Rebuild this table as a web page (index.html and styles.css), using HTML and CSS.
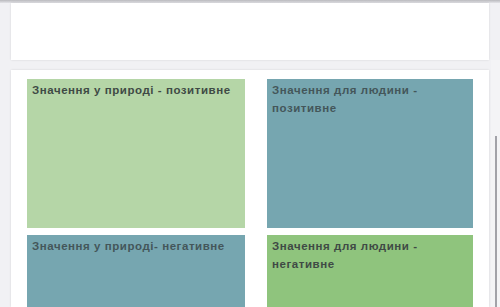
FILE: index.html
```html
<!DOCTYPE html>
<html lang="uk">
<head>
<meta charset="utf-8">
<link rel="stylesheet" href="styles.css">
</head>
<body>
<div class="topshade"></div>
<div class="page">
  <div class="card card-top"></div>
  <div class="card card-main">
    <div class="grid">
      <div class="tile t-green">Значення у природі - позитивне</div>
      <div class="tile t-teal">Значення для людини - позитивне</div>
      <div class="tile t-teal">Значення у природі- негативне</div>
      <div class="tile t-green2">Значення для людини - негативне</div>
    </div>
  </div>
</div>
<div class="scrollbar"><div class="thumb"></div></div>
</body>
</html>
```
FILE: styles.css
```css
html, body {
  margin: 0;
  padding: 0;
  width: 500px;
  height: 307px;
  overflow: hidden;
  background: #f1f1f4;
  font-family: "Liberation Sans", Arial, sans-serif;
}
.topshade {
  height: 3px;
  background: linear-gradient(#b9b9bd, #e4e4e8);
}
.page {
  margin: 0 11px;
  width: 478px;
  display: flex;
  flex-direction: column;
  gap: 10px;
}
.card {
  background: #fff;
  box-shadow: 0 0 2px rgba(0,0,0,0.12);
}
.card-top {
  height: 57px;
}
.card-main {
  padding: 9px 16px 0 16px;
  height: 228px;
  overflow: hidden;
}
.grid {
  display: grid;
  grid-template-columns: 218px 206px;
  column-gap: 22px;
  row-gap: 7px;
  grid-auto-rows: 149px;
}
.tile {
  padding: 2px 5px;
  font-size: 11.5px;
  font-weight: bold;
  line-height: 18px;
  letter-spacing: 0.55px;
  color: #3f4a45;
}
.t-green { background: #b5d6a7; }
.t-teal { background: #76a6b0; color: #44565a; }
.t-green2 { background: #8fc47d; }
.scrollbar {
  position: absolute;
  top: 60px;
  right: 0;
  width: 9px;
  height: 247px;
  background: #f4f4f6;
}
.thumb {
  position: absolute;
  left: 4px;
  top: 76px;
  width: 2px;
  height: 171px;
  background: #a2a2a8;
}
```
